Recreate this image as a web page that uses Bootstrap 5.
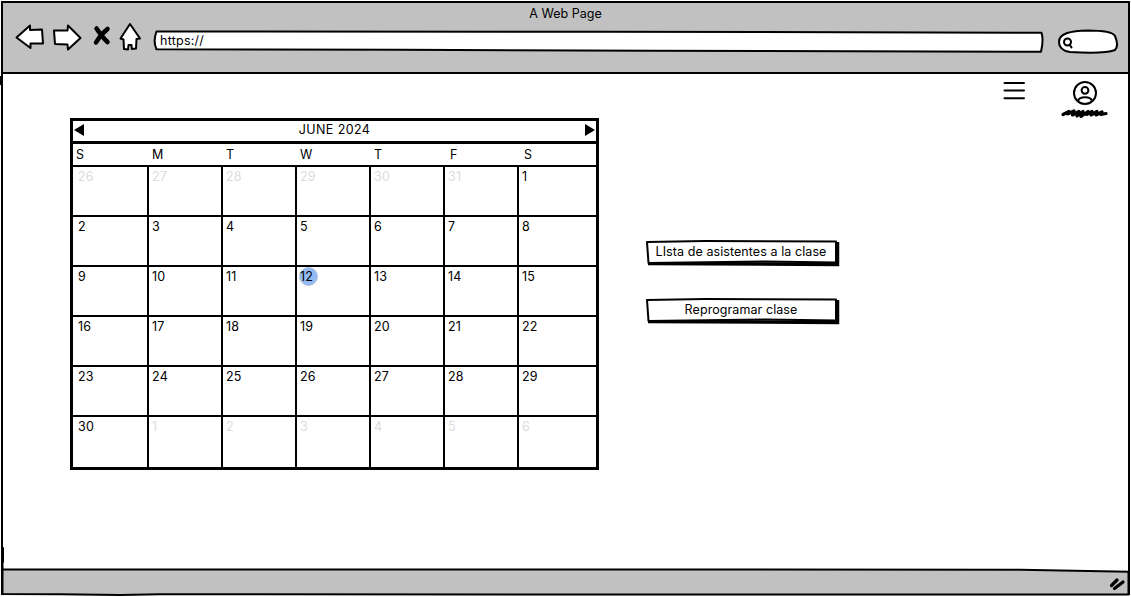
<!DOCTYPE html>
<html lang="es">
<head>
<meta charset="utf-8">
<meta name="viewport" content="width=device-width, initial-scale=1">
<title>A Web Page</title>
<link href="https://cdn.jsdelivr.net/npm/bootstrap@5.3.0/dist/css/bootstrap.min.css" rel="stylesheet">
<style>
  body { font-family: Inter, "Liberation Sans", sans-serif; font-size: 12.5px; line-height: 16px; color: #000; }
  svg { display: block; overflow: visible; flex: none; }
  .ink { fill: none; stroke: #000; stroke-width: 2; stroke-linecap: round; stroke-linejoin: round; }
  .ink.paper, .paper { fill: #fff; }
  .brush { stroke-width: 3.2px; }
  .marker { stroke-width: 4.5px; }
  .browser { width: 1131px; height: 597px; padding: 1px 1px 2px 1px; }
  .window { border: 2px solid #000; border-bottom: 0; height: 594px; width: 1129px; }
  .chrome { background: #c1c1c1; height: 71px; border-bottom: 2px solid #000; }
  .page-title { padding-top: 3px; height: 19px; letter-spacing: .02px; }
  .tools { padding-left: 12px; }
  .address { width: 891px; height: 24px; margin-top: 8px; }
  .address span { left: 7px; top: 3px; letter-spacing: .25px; }
  .search { margin: 5px 0 0 13px; }
  .calendar { width: 529px; height: 352px; border: 3px solid #000; margin: 44px 0 0 67px; }
  .month { height: 23px; border-bottom: 3px solid #000; padding: 0 1px; }
  .month span { padding-top: 1px; letter-spacing: .42px; }
  .week { display: grid; grid-template-columns: repeat(6, 74px) 79px; }
  .names { height: 21px; padding-top: 3px; }
  .names span { padding-left: 5px; }
  .names span:first-child { padding-left: 3px; }
  .names span:nth-child(n+6) { padding-left: 7px; }
  .days { grid-template-rows: repeat(5, 50px) 52px; }
  .day { border-top: 2px solid #000; border-left: 2px solid #000; padding: 2px 0 0 3px; letter-spacing: .2px; }
  .day:nth-child(7n+1) { border-left: 0; padding-left: 5px; }
  .off { color: #dcdcdc; }
  .today { position: relative; z-index: 0; }
  .today::before { content: ""; position: absolute; z-index: -1; width: 19px; height: 19px; left: -1px; top: -2px; border-radius: 50%; background: #94baf3; border: 1px solid #b6c4db; }
  .actions { margin: 165px 0 0 46px; gap: 30px; }
  .sketch-btn { width: 194px; height: 28px; padding: 0 2px 2px 0; border: 0; border-radius: 0; background: none; font-size: 12.5px; line-height: 16px; color: #000; letter-spacing: .08px; }
  .account { margin: 6px 19px 0 auto; gap: 35px; }
  .status { height: 28px; }
  .status svg { margin-left: -1px; }
  .nick { left: 0; top: 76px; width: 2px; height: 9px; }
</style>
</head>
<body class="m-0 overflow-hidden bg-white">
<div class="browser position-relative">
  <div class="nick position-absolute bg-black"></div>
  <div class="window d-flex flex-column">
    <header class="chrome">
      <div class="page-title text-center">A Web Page</div>
      <div class="tools d-flex align-items-start">
        <svg width="138" height="30" viewBox="15 22 138 30">
          <g class="ink">
            <path class="paper" d="M16.500 37.500L30 25.500V30L42 29.500L43 43.500L30.500 43.500V48Z"/>
            <path class="paper" d="M54 30.500L67.500 30.500L68 25.500L80.500 38L68 49.500L67.500 44.500L55 44Z"/>
            <path class="paper" d="M120.500 38.500L130 24L140 38.500L136.500 39L136 48.500L131.800 49L131.500 45H128.500L128 49.500L124 49L123.500 39.500Z"/>
            <path class="marker" d="M96.500 28.500C99 32 103 38 107.500 42M107.500 29C102.500 33 98 39 96 42.500"/>
          </g>
        </svg>
        <div class="address position-relative">
          <svg width="891" height="24" viewBox="153 30 891 24">
            <path class="ink paper" d="M156.500 31.500L600 31.700L1041.500 32.800C1043 37 1043 43 1041 51.800L650 50.800L400 49.800L156.500 49.300C154 44 154 38 156.500 31.500Z"/>
          </svg>
          <span class="position-absolute">https://</span>
        </div>
        <svg class="search" width="62" height="26" viewBox="1057 26 62 26">
          <path class="ink paper" d="M1059 41C1059 32 1071 30 1088 29.500C1103 29.500 1113 31 1115 35C1117.500 41 1118 46 1115 49C1106 52.500 1086 52 1070 51C1063 50 1059 47 1059 41Z"/>
          <circle class="ink" cx="1067.500" cy="41" r="3.500"/><path class="ink" d="M1069.500 43.500L1071.500 46.500"/>
        </svg>
      </div>
    </header>

    <main class="d-flex flex-grow-1 align-items-start">
      <section class="calendar">
        <div class="month d-flex justify-content-between">
          <svg width="10" height="14" class="mt-1"><path d="M0 5L10 -1V11Z"/></svg>
          <span>JUNE 2024</span>
          <svg width="10" height="14" class="mt-1"><path d="M0 -1L10 5L0 11Z"/></svg>
        </div>
        <div class="week names">
          <span>S</span><span>M</span><span>T</span><span>W</span><span>T</span><span>F</span><span>S</span>
        </div>
        <div class="week days">
          <div class="day off">26</div><div class="day off">27</div><div class="day off">28</div><div class="day off">29</div><div class="day off">30</div><div class="day off">31</div><div class="day">1</div>
          <div class="day">2</div><div class="day">3</div><div class="day">4</div><div class="day">5</div><div class="day">6</div><div class="day">7</div><div class="day">8</div>
          <div class="day">9</div><div class="day">10</div><div class="day">11</div><div class="day"><span class="today">12</span></div><div class="day">13</div><div class="day">14</div><div class="day">15</div>
          <div class="day">16</div><div class="day">17</div><div class="day">18</div><div class="day">19</div><div class="day">20</div><div class="day">21</div><div class="day">22</div>
          <div class="day">23</div><div class="day">24</div><div class="day">25</div><div class="day">26</div><div class="day">27</div><div class="day">28</div><div class="day">29</div>
          <div class="day">30</div><div class="day off">1</div><div class="day off">2</div><div class="day off">3</div><div class="day off">4</div><div class="day off">5</div><div class="day off">6</div>
        </div>
      </section>

      <div class="actions d-flex flex-column">
        <button class="btn sketch-btn position-relative" type="button">
          <svg class="position-absolute top-0 start-0" width="194" height="28"><path d="M3 24.500L192.500 25.500V3" fill="none" stroke="#000" stroke-width="3.500"/><path class="ink paper" d="M2 3L60 2L191 2.500V23.500L120 22.500L3.500 24Z"/></svg>
          <span class="position-relative">LIsta de asistentes a la clase</span>
        </button>
        <button class="btn sketch-btn position-relative" type="button">
          <svg class="position-absolute top-0 start-0" width="194" height="28"><path d="M3 24.500L192.500 25.500V3" fill="none" stroke="#000" stroke-width="3.500"/><path class="ink paper" d="M2 3L60 2L191 2.500V23.500L120 22.500L3.500 24Z"/></svg>
          <span class="position-relative">Reprogramar clase</span>
        </button>
      </div>

      <nav class="account d-flex align-items-start">
        <svg width="24" height="20" viewBox="1002 79 24 20"><path class="ink" d="M1004.500 82H1024M1004.500 89.500H1024M1004.500 97.200H1024"/></svg>
        <svg width="48" height="42" viewBox="1061 79 48 42"><g class="ink">
          <circle cx="1085" cy="92" r="11"/><circle cx="1085" cy="89.300" r="3.400"/>
          <path d="M1078 100C1079 95 1091 95 1092 100"/>
          <path class="brush" d="M1063 113.500L1069 110.500L1067.500 113L1074 110L1072.500 114L1079 110.500L1077 115L1083 110.500L1081 115.500L1088 110.500L1086.500 113.500L1092 110.500L1091 114L1097 110.500L1096 114L1102 111L1101 113.500L1106 112.500"/>
        </g></svg>
      </nav>
    </main>

    <footer class="status">
      <svg width="1128" height="30" viewBox="2 567 1128 30">
        <path d="M3 570H700L1000 570L1129 572V595H3Z" fill="#c1c1c1"/>
        <path class="ink" d="M3 569.500L600 569.500L1020 569.700L1129 571.800M2.500 594L60 594.300L120 595L160 594.300L700 594.500L1128.500 594.500V572M3 548V562M2.500 560V594"/>
        <path class="ink brush" d="M1111.500 585.500L1117 580M1114.500 588.500L1123 582"/>
      </svg>
    </footer>
  </div>
</div>
</body>
</html>
